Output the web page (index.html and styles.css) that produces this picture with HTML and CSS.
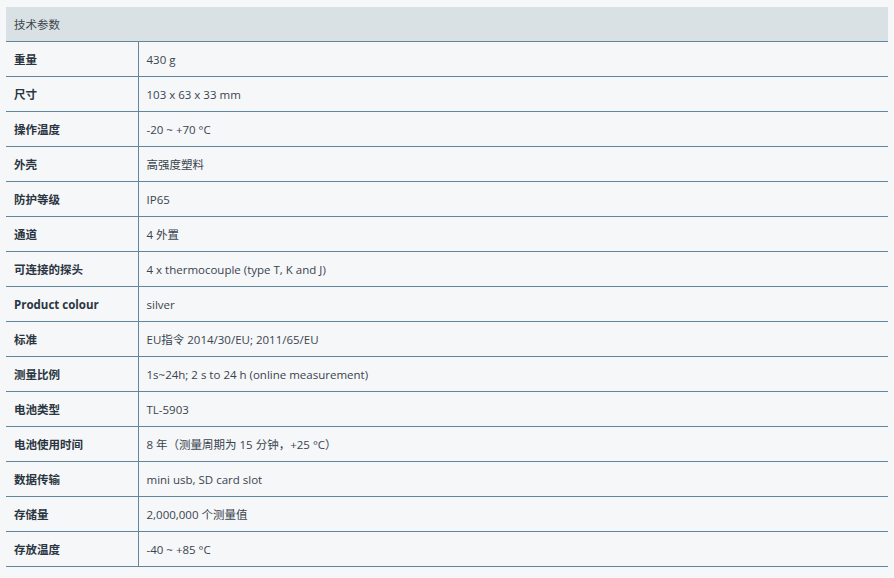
FILE: index.html
```html
<!DOCTYPE html>
<html lang="zh">
<head>
<meta charset="utf-8">
<link rel="stylesheet" href="styles.css">
</head>
<body>
<table class="spec">
  <colgroup>
    <col class="col-k">
    <col class="col-v">
  </colgroup>
  <thead>
    <tr><th colspan="2" class="head">技术参数</th></tr>
  </thead>
  <tbody>
    <tr><td class="k">重量</td><td class="v">430 g</td></tr>
    <tr><td class="k">尺寸</td><td class="v">103 x 63 x 33 mm</td></tr>
    <tr><td class="k">操作温度</td><td class="v">-20 ~ +70 °C</td></tr>
    <tr><td class="k">外壳</td><td class="v">高强度塑料</td></tr>
    <tr><td class="k">防护等级</td><td class="v">IP65</td></tr>
    <tr><td class="k">通道</td><td class="v">4 外置</td></tr>
    <tr><td class="k">可连接的探头</td><td class="v">4 x thermocouple (type T, K and J)</td></tr>
    <tr><td class="k">Product colour</td><td class="v">silver</td></tr>
    <tr><td class="k">标准</td><td class="v">EU指令 2014/30/EU; 2011/65/EU</td></tr>
    <tr><td class="k">测量比例</td><td class="v">1s~24h; 2 s to 24 h (online measurement)</td></tr>
    <tr><td class="k">电池类型</td><td class="v">TL-5903</td></tr>
    <tr><td class="k">电池使用时间</td><td class="v">8 年（测量周期为 15 分钟，+25 °C）</td></tr>
    <tr><td class="k">数据传输</td><td class="v">mini usb, SD card slot</td></tr>
    <tr><td class="k">存储量</td><td class="v">2,000,000 个测量值</td></tr>
    <tr><td class="k">存放温度</td><td class="v">-40 ~ +85 °C</td></tr>
  </tbody>
</table>
</body>
</html>
```
FILE: styles.css
```css
html, body {
  margin: 0;
  background: #f5f7f9;
}
body {
  padding: 7px 6px;
  font-family: "Open Sans", "Noto Sans CJK SC", sans-serif;
  font-size: 11.5px;
  color: #333b44;
}
.spec {
  width: 882px;
  border-collapse: collapse;
  table-layout: fixed;
}
.col-k {
  width: 132px;
}
.spec th, .spec td {
  height: 33px;
  padding: 1px 8px 0;
  text-align: left;
  vertical-align: middle;
  line-height: 16px;
  border-bottom: 1px solid #62879c;
}
.head {
  background: #d9e1e4;
  font-weight: normal;
  color: #3d464f;
}
.k {
  font-weight: bold;
  color: #2b3540;
  border-right: 1px solid #62879c;
}
.v {
  color: #3a444e;
}
```
